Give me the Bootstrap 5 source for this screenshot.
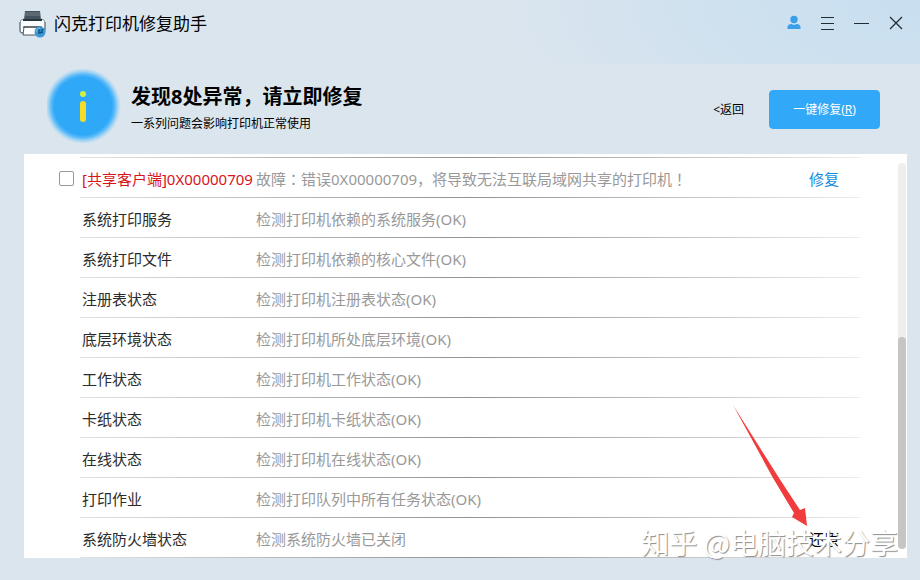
<!DOCTYPE html>
<html lang="zh-CN">
<head>
<meta charset="utf-8">
<meta name="viewport" content="width=device-width, initial-scale=1">
<title>闪克打印机修复助手</title>
<link href="https://cdn.jsdelivr.net/npm/bootstrap@5.3.0/dist/css/bootstrap.min.css" rel="stylesheet">
<style>
body { background: #dbe5ee; font-family: "Noto Sans", "Noto Sans CJK SC", sans-serif; font-size: 15px; color: #000; }
.titlebar { height: 64px; padding: 9px 15px 0 19px; background: radial-gradient(ellipse 420px 190px at 100% 0, #c8dff0, #cfe1ef 50%, #dbe5ee); }
.app-name { font-size: 17px; line-height: 28px; }
.win-btn { width: 18px; height: 28px; }
.summary { height: 90px; padding: 0 40px 0 47px; }
.info-badge { margin-top: 5px; }
.summary-text { margin: 18px 0 0 10px; }
.summary-title { font-size: 20px; line-height: 30px; font-weight: 700; }
.fs-note { font-size: 12px; line-height: 18px; }
.summary-text .fs-note { margin-top: 3px; }
.summary-actions { margin-top: 26px; gap: 25px; }
.fix-all { --bs-btn-bg: #31a8f8; --bs-btn-border-color: #31a8f8; --bs-btn-color: #fff; --bs-btn-hover-bg: #1d97ea; --bs-btn-hover-color: #fff; width: 111px; height: 39px; --bs-btn-border-radius: 4px; }
.panel { margin: 0 13px 22px 24px; padding: 3px 1px 0 0; }
.checks { table-layout: fixed; line-height: 24px; --line: linear-gradient(90deg, #e2e2e2, #929292 50%, #ececec); }
.checks tr { height: 40px; background: var(--line) 56px 100% / calc(100% - 56px) 1px no-repeat; }
.checks tr:first-child { height: 41px; background: var(--line) 56px 0 / calc(100% - 56px) 1px no-repeat, var(--line) 56px 100% / calc(100% - 56px) 1px no-repeat; }
.checks th, .checks td { padding: 2px 0 0 2px; font-weight: 400; white-space: nowrap; vertical-align: middle; }
.checks th { color: #2b2b2b; }
.checks td { color: #999; }
.checks .fault { color: #d8141b; }
.col-tick { width: 56px; }
.col-name { width: 174px; }
.col-act { width: 53px; }
.checks .tick-cell { padding: 0 6px 0 0; text-align: right; }
.tick { width: 15px; height: 15px; margin: 0; border: 1px solid #999; border-radius: 2px; vertical-align: middle; }
.checks .tick { border-radius: 2px; margin-bottom: 2px; }
.centered-mark { font-family: "Noto Sans CJK JP", sans-serif; }
.repair { color: #178bdc; }
.scroll-track { width: 8px; margin: 6px 0 9px 38px; border-radius: 4px; background: #eee; }
.scroll-thumb { height: 55%; border-radius: 4px; background: #c5c5c5; }
.pointer-arrow { right: 100px; bottom: 31px; }
.watermark { right: 9px; bottom: -4px; font: 28px/40px "Noto Sans CJK SC", sans-serif; color: #fff; text-shadow: 1px 1px 1px #8c8c8c; pointer-events: none; }
</style>
</head>
<body>
<header class="titlebar d-flex justify-content-between align-items-start">
  <div class="d-flex align-items-center">
    <svg class="me-2" width="27" height="30" viewBox="0 0 27 30" aria-hidden="true">
      <path d="M1 14q0-4 4-4h17q4 0 4 4v8q0 2-2 2H3q-2 0-2-2Z" fill="#f9fbfc" stroke="#8b9aa5"/>
      <path d="M1 13v9q0 2 3 2M26 13v8" fill="none" stroke="#5d6c76"/>
      <path d="M6 2h15l1 9q0 1-1 1H6q-1 0-1-1Z" fill="#46525b"/>
      <path d="M6 3h15v4H6Z" fill="#5c6972"/>
      <path d="M4 11h19" stroke="#26343d" stroke-width="2"/>
      <path d="M5 18h17v8H4Z" fill="#fff" stroke="#4a5760"/>
      <path d="M4 18h19" stroke="#26343d"/>
      <circle cx="21" cy="23" r="5.500" fill="#3c97d6"/>
      <path d="M20 20v4l4-1M22 22l2-2" fill="none" stroke="#14507f" stroke-width="1.400"/>
      <path d="M17 23q1-4 4-4" fill="none" stroke="#80c8ee"/>
    </svg>
    <h1 class="app-name fw-normal m-0">闪克打印机修复助手</h1>
  </div>
  <div class="d-flex gap-3">
    <button class="win-btn btn p-0 border-0 d-flex align-items-center justify-content-center" aria-label="账户"><svg width="16" height="16" viewBox="0 0 16 16"><circle cx="8" cy="4.500" r="3.700" fill="#399fe8"/><path d="M1.500 14v-1.500q0-3.500 4-3.500l2.500 1 2.500-1q4 0 4 3.500V14Z" fill="#399fe8"/></svg></button>
    <button class="win-btn btn p-0 border-0 d-flex align-items-center justify-content-center" aria-label="菜单"><svg width="14" height="14" viewBox="0 0 14 14"><path d="M0 1.500h13M0 7.500h13M0 13.500h13" stroke="#222d36"/></svg></button>
    <button class="win-btn btn p-0 border-0 d-flex align-items-center justify-content-center" aria-label="最小化"><svg width="16" height="14" viewBox="0 0 16 14"><path d="M0 7.500h15" stroke="#222d36"/></svg></button>
    <button class="win-btn btn p-0 border-0 d-flex align-items-center justify-content-center" aria-label="关闭"><svg width="14" height="14" viewBox="0 0 14 14"><path d="m1 1 12 12M13 1 1 13" stroke="#222d36" stroke-width="1.300"/></svg></button>
  </div>
</header>

<section class="summary d-flex align-items-start">
  <svg class="info-badge flex-shrink-0" width="74" height="74" viewBox="-1 -1 74 74" aria-hidden="true">
    <defs><radialGradient id="glow"><stop offset="0.760" stop-color="#2fa8f8"/><stop offset="0.840" stop-color="#44b3fa" stop-opacity=".85"/><stop offset="1" stop-color="#7ccbf8" stop-opacity="0"/></radialGradient></defs>
    <circle cx="35" cy="36" r="38" fill="url(#glow)"/>
    <circle cx="35" cy="24" r="3" fill="#d3ef3e"/>
    <rect x="32" y="31" width="6" height="21" rx="3" fill="#f3dd27"/>
  </svg>
  <div class="summary-text">
    <h2 class="summary-title m-0">发现8处异常，请立即修复</h2>
    <p class="fs-note mb-0">一系列问题会影响打印机正常使用</p>
  </div>
  <div class="summary-actions d-flex align-items-center ms-auto">
    <a href="#" class="fs-note text-black text-decoration-none">&lt;返回</a>
    <button class="fix-all btn fs-note p-0" accesskey="r">一键修复(<u>R</u>)</button>
  </div>
</section>

<main class="panel bg-white d-flex position-relative">
  <table class="checks flex-grow-1">
    <colgroup><col class="col-tick"><col class="col-name"><col><col class="col-act"></colgroup>
    <tbody>
      <tr><td class="tick-cell"><input type="checkbox" class="tick form-check-input" id="fault709"></td><th scope="row"><label class="fault" for="fault709">[共享客户端]0X00000709</label></th><td>故障<span class="centered-mark" lang="ja">：</span>错误0X00000709，将导致无法互联局域网共享的打印机<span class="centered-mark" lang="ja">！</span></td><td><a href="#" class="repair text-decoration-none">修复</a></td></tr>
      <tr><td></td><th scope="row">系统打印服务</th><td>检测打印机依赖的系统服务(OK)</td><td></td></tr>
      <tr><td></td><th scope="row">系统打印文件</th><td>检测打印机依赖的核心文件(OK)</td><td></td></tr>
      <tr><td></td><th scope="row">注册表状态</th><td>检测打印机注册表状态(OK)</td><td></td></tr>
      <tr><td></td><th scope="row">底层环境状态</th><td>检测打印机所处底层环境(OK)</td><td></td></tr>
      <tr><td></td><th scope="row">工作状态</th><td>检测打印机工作状态(OK)</td><td></td></tr>
      <tr><td></td><th scope="row">卡纸状态</th><td>检测打印机卡纸状态(OK)</td><td></td></tr>
      <tr><td></td><th scope="row">在线状态</th><td>检测打印机在线状态(OK)</td><td></td></tr>
      <tr><td></td><th scope="row">打印作业</th><td>检测打印队列中所有任务状态(OK)</td><td></td></tr>
      <tr><td></td><th scope="row">系统防火墙状态</th><td>检测系统防火墙已关闭</td><td><a href="#" class="text-black text-decoration-none">还原</a></td></tr>
    </tbody>
  </table>
  <div class="scroll-track d-flex flex-column justify-content-end flex-shrink-0"><div class="scroll-thumb"></div></div>
  <svg class="pointer-arrow position-absolute" width="76" height="122" viewBox="0 0 76 122" aria-hidden="true"><path d="M2 0 48 73 69 105 74 103 76 121 61 112 63 108 42 73Z" fill="#f03c3c"/></svg>
  <div class="watermark position-absolute text-nowrap">知乎 @电脑技术分享</div>
</main>
<script src="https://cdn.jsdelivr.net/npm/bootstrap@5.3.0/dist/js/bootstrap.bundle.min.js"></script>
</body>
</html>
